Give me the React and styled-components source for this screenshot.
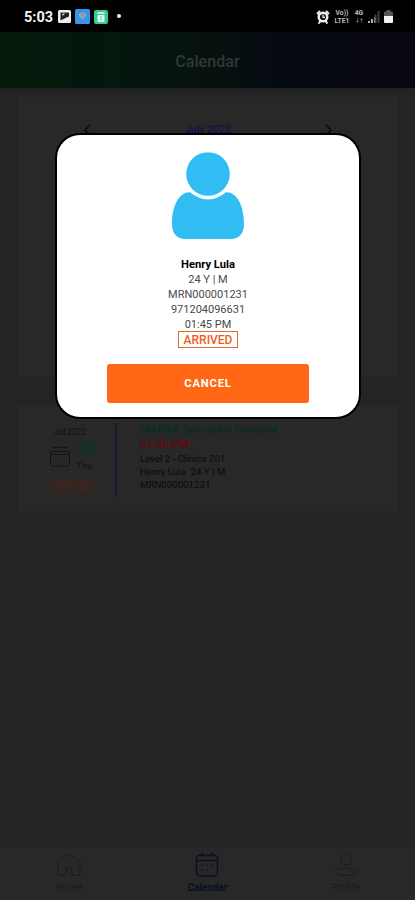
import React from "react"
import styled, { createGlobalStyle } from "styled-components"

const GlobalStyle = createGlobalStyle`
  * {
    box-sizing: border-box;
  }
  body {
    margin: 0;
    background: #242424;
    font-family: Roboto, "Liberation Sans", sans-serif;
  }
`
const Screen = styled.div`
  position: relative;
  display: flex;
  flex-direction: column;
  width: 415px;
  height: 900px;
  overflow: hidden;
  background: #242424;
`
const StatusBar = styled.div`
  display: flex;
  justify-content: space-between;
  height: 32px;
  padding: 1px 22px 0 24px;
  background: #000;
  color: #f4f4f4;
`
const StatusGroup = styled.div`
  display: flex;
  align-items: center;
  gap: ${({ $gap }) => $gap}px;
`
const Clock = styled.span`
  width: 29px;
  margin-right: 1px;
  padding-top: 1px;
  font-size: 14.5px;
  font-weight: 700;
`
const Dot = styled.span`
  width: 4px;
  height: 4px;
  margin: -2px 0 0 5px;
  border-radius: 50%;
  background: #eee;
`
const NetworkColumn = styled.span`
  display: flex;
  flex-direction: column;
  align-items: center;
  width: ${({ $width }) => $width}px;
`
const NetworkLabel = styled.span`
  font-size: 6.8px;
  font-weight: 700;
  line-height: 8px;
  color: #bbb;
`
const Header = styled.header`
  display: flex;
  align-items: center;
  justify-content: center;
  height: 57px;
  padding-top: 3px;
  background: linear-gradient(90deg, #04190a 0%, #06160f 35%, #07110f 52%, #060a12 68%, #090713 100%);
  border-bottom: 1px solid #1b2020;
`
const HeaderTitle = styled.h1`
  margin: 0;
  font-size: 16px;
  font-weight: 500;
  letter-spacing: 0.1px;
  color: #303737;
`
const Content = styled.main`
  flex: 1;
  display: flex;
  flex-direction: column;
  gap: 29px;
  padding: 8px 17px 0 18px;
`
const MonthCard = styled.section`
  height: 279px;
  padding: 24px 65px 0;
  background: #282828;
`
const MonthRow = styled.div`
  display: flex;
  align-items: center;
  justify-content: space-between;
`
const MonthName = styled.span`
  font-size: 10.5px;
  line-height: 18px;
  font-weight: 500;
  color: #12124a;
`
const VisitCard = styled.section`
  display: flex;
  height: 106px;
  padding: 18px 0 0 32px;
  background: #282828;
`
const DateColumn = styled.div`
  display: flex;
  flex-direction: column;
  width: 67px;
  height: 74px;
  padding-top: 4px;
  border-right: 2px solid #1c1832;
`
const MonthLabel = styled.span`
  padding-left: 4px;
  font-size: 8.3px;
  line-height: 10px;
  color: #101010;
`
const DateRow = styled.div`
  display: flex;
  align-items: center;
  gap: 6px;
  height: 38px;
`
const DayBlock = styled.div`
  display: flex;
  flex-direction: column;
`
const DayNumber = styled.span`
  font-size: 16px;
  line-height: 19px;
  font-weight: 700;
  color: #0a3320;
`
const DayName = styled.span`
  font-size: 9.5px;
  line-height: 15px;
  color: #111;
`
const SmallTag = styled.span`
  width: 44px;
  height: 13px;
  margin-top: 5px;
  border: 1px solid #4a2010;
  font-size: 8.8px;
  line-height: 12px;
  text-align: center;
  color: #56230e;
`
const VisitDetails = styled.div`
  display: flex;
  flex-direction: column;
  padding-left: 23px;
`
const Hospital = styled.span`
  font-size: 11px;
  line-height: 14px;
  font-weight: 700;
  letter-spacing: 0.1px;
  color: #0a2e1d;
`
const VisitTime = styled.span`
  font-size: 11.3px;
  line-height: 15px;
  font-weight: 700;
  color: #5c0c10;
`
const VisitLine = styled.span`
  font-size: 9.7px;
  line-height: 13px;
  font-weight: 400;
  white-space: pre;
  color: #0a0a0a;
`
const TabBar = styled.nav`
  display: flex;
  height: 53px;
  background: #282828;
`
const Tab = styled.div`
  flex: 1;
  display: flex;
  flex-direction: column;
  align-items: center;
  padding-top: 5px;
  color: ${({ $active }) => ($active ? "#091024" : "#1b1b1b")};
`
const TabLabel = styled.span`
  margin-top: 4px;
  font-size: 10px;
  line-height: 13px;
  font-weight: ${({ $bold }) => ($bold ? 700 : 400)};
`
const Overlay = styled.div`
  position: absolute;
  inset: 0;
  display: flex;
  justify-content: center;
  align-items: flex-start;
  padding: 133px 0 0 1px;
`
const Dialog = styled.div`
  display: flex;
  flex-direction: column;
  align-items: center;
  width: 306px;
  height: 286px;
  padding-top: 17px;
  border: 2px solid #000;
  border-radius: 25px;
  background: #fff;
`
const PatientName = styled.strong`
  margin-top: 17px;
  font-size: 11.2px;
  line-height: 15px;
  font-weight: 700;
  color: #000;
`
const PatientLine = styled.span`
  font-size: 11px;
  line-height: 15px;
  color: #4a4a4a;
`
const ArrivedTag = styled.span`
  width: 60px;
  height: 17px;
  margin-top: -1px;
  border: 1px solid #e36a2c;
  font-size: 12px;
  line-height: 16px;
  font-weight: 500;
  text-align: center;
  color: #e8601c;
`
const CancelButton = styled.button`
  width: 202px;
  height: 39px;
  margin-top: 16px;
  padding: 0;
  border: 0;
  border-radius: 3px;
  background: #ff6714;
  font-family: inherit;
  font-size: 11.3px;
  font-weight: 700;
  letter-spacing: 0.75px;
  color: #fff;
`

const GalleryIcon = () => (
  <svg width="13" height="13" viewBox="0 0 13 13">
    <rect width="13" height="13" rx="1.5" fill="#eee" />
    <path d="M2.500 2.500h8.500v4L8.500 7.500 5.500 9 2.500 10.500z" fill="#222" />
    <path d="M4.500 3.500h2.500L4.500 6z" fill="#eee" />
  </svg>
)
const MapIcon = () => (
  <svg width="15" height="15" viewBox="0 0 15 15">
    <rect width="15" height="15" rx="1.5" fill="#3c91e8" />
    <path d="M4 5l3.500-2L11 5v2L7.500 10.500 4 7z" fill="#8cabc5" />
    <circle cx="7.5" cy="6" r="1.8" fill="#9b9187" />
  </svg>
)
const ShopIcon = () => (
  <svg width="14" height="14" viewBox="0 0 14 14">
    <rect width="14" height="14" rx="2" fill="#3bc79c" />
    <rect x="3.5" y="5" width="7" height="7" rx="1" fill="#d9fff2" />
    <path d="M4 4V3h6v1" fill="none" stroke="#d9fff2" strokeWidth="1.3" />
    <path d="M6 7h2M7 8.500v2" stroke="#3bc79c" strokeWidth="1.2" />
  </svg>
)
const AlarmIcon = () => (
  <svg width="14" height="14" viewBox="0 0 14 14">
    <path d="M1 4l3-3M13 4l-3-3M2.500 13.500l2-2.500M11.500 13.500l-2-2.500" stroke="#eee" strokeWidth="2" />
    <circle cx="7" cy="7" r="4.3" fill="#111" stroke="#eee" strokeWidth="2.4" />
    <path d="M7 4.500V7.300h2" fill="none" stroke="#eee" strokeWidth="1.2" />
  </svg>
)
const DataIcon = () => (
  <svg width="9" height="7" viewBox="0 0 9 7" fill="none" stroke="#555">
    <path d="M2.500 1v4.500M1 4l1.500 1.500L4 4M6.500 6V1.500M5 3l1.500-1.500L8 3" />
  </svg>
)
const SignalIcon = () => (
  <svg width="12" height="12" viewBox="0 0 12 12">
    <path d="M1 10v2M4 8v4" stroke="#ddd" strokeWidth="1.6" />
    <path d="M7.500 3.500V12M10.500 0V12" stroke="#3d3d3d" strokeWidth="2" />
    <path d="M6.800 6v6" stroke="#999" strokeWidth="1" />
  </svg>
)
const BatteryIcon = () => (
  <svg width="9" height="13" viewBox="0 0 9 13">
    <path d="M2.500 0h4v1.500H8a1 1 0 011 1V6H0V2.500a1 1 0 011-1h1.500z" fill="#555" />
    <path d="M0 6h9v6a1 1 0 01-1 1H1a1 1 0 01-1-1z" fill="#f2f2f2" />
  </svg>
)
const ArrowIcon = ({ d }) => (
  <svg width="8" height="12" viewBox="0 0 8 12">
    <path d={d} fill="none" stroke="#0b0b0b" strokeWidth="1.5" />
  </svg>
)
const VisitCalendarIcon = () => (
  <svg width="20" height="22" viewBox="0 0 20 22" fill="none" stroke="#101412">
    <path d="M2 2.500h16M4 1v3M10 1v3M16 1v3" strokeWidth="0.8" />
    <rect x="0.5" y="6.5" width="19" height="14.5" rx="2" />
    <path d="M1 9.500h18M6 13h1M9.500 13h1M13 13h1" strokeWidth="0.8" />
  </svg>
)
const HomeIcon = () => (
  <svg width="24" height="25" viewBox="0 0 24 25" fill="none" stroke="currentColor">
    <path d="M9 23.500H3a2 2 0 01-2-2V10L9.500 3q2.500-2 5 0L23 10v11.500a2 2 0 01-2 2h-6V18q0-3-3-3t-3 3z" />
  </svg>
)
const TabCalendarIcon = () => (
  <svg width="24" height="25" viewBox="0 0 24 25" fill="none" stroke="currentColor" strokeWidth="1.5">
    <rect x="1.5" y="3" width="21" height="21" rx="4" />
    <path d="M7 0v5M17 0v5M2 8.500h20" />
    <path d="M6 13h2M11 13h2M16 13h2M6 18h2M11 18h2" strokeWidth="1" />
  </svg>
)
const ProfileIcon = () => (
  <svg width="24" height="25" viewBox="0 0 24 25" fill="none" stroke="currentColor">
    <circle cx="12" cy="7.5" r="5.5" />
    <path d="M1.500 19.500q1-3 10.500-3t10.500 3q0 4-10.500 4t-10.500-4z" />
  </svg>
)
const PatientIcon = () => (
  <svg width="74" height="88" viewBox="0 0 74 88" fill="#31bdf3">
    <circle cx="37" cy="22" r="21.8" />
    <path d="M19 40.300Q37 54.500 55 40.300C65 40 73 52 73 72C73 81.500 68 87 60 87H14C6 87 1 81.500 1 72C1 52 9 40 19 40.300z" />
  </svg>
)

const App = () => {
  return (
    <Screen>
      <GlobalStyle />
      <StatusBar>
        <StatusGroup $gap={4}>
          <Clock>5:03</Clock>
          <GalleryIcon />
          <MapIcon />
          <ShopIcon />
          <Dot />
        </StatusGroup>
        <StatusGroup $gap={4}>
          <AlarmIcon />
          <NetworkColumn $width={16}>
            <NetworkLabel>Vo))</NetworkLabel>
            <NetworkLabel>LTE1</NetworkLabel>
          </NetworkColumn>
          <NetworkColumn $width={10}>
            <NetworkLabel>4G</NetworkLabel>
            <DataIcon />
          </NetworkColumn>
          <SignalIcon />
          <BatteryIcon />
        </StatusGroup>
      </StatusBar>
      <Header>
        <HeaderTitle>Calendar</HeaderTitle>
      </Header>
      <Content>
        <MonthCard>
          <MonthRow>
            <ArrowIcon d="M7 1L2 6l5 5" />
            <MonthName>July 2022</MonthName>
            <ArrowIcon d="M1 1l5 5-5 5" />
          </MonthRow>
        </MonthCard>
        <VisitCard>
          <DateColumn>
            <MonthLabel>Jul 2022</MonthLabel>
            <DateRow>
              <VisitCalendarIcon />
              <DayBlock>
                <DayNumber>28</DayNumber>
                <DayName>Thu</DayName>
              </DayBlock>
            </DateRow>
            <SmallTag>ARRIVED</SmallTag>
          </DateColumn>
          <VisitDetails>
            <Hospital>MANSA Specialist Hospital</Hospital>
            <VisitTime>01:45 PM</VisitTime>
            <VisitLine>Level 2 - Clinics 201</VisitLine>
            <VisitLine>{"Henry Lula  24 Y | M"}</VisitLine>
            <VisitLine>MRN000001231</VisitLine>
          </VisitDetails>
        </VisitCard>
      </Content>
      <TabBar>
        <Tab>
          <HomeIcon />
          <TabLabel>Home</TabLabel>
        </Tab>
        <Tab $active>
          <TabCalendarIcon />
          <TabLabel $bold>Calendar</TabLabel>
        </Tab>
        <Tab>
          <ProfileIcon />
          <TabLabel>Profile</TabLabel>
        </Tab>
      </TabBar>
      <Overlay>
        <Dialog>
          <PatientIcon />
          <PatientName>Henry Lula</PatientName>
          <PatientLine>24 Y | M</PatientLine>
          <PatientLine>MRN000001231</PatientLine>
          <PatientLine>971204096631</PatientLine>
          <PatientLine>01:45 PM</PatientLine>
          <ArrivedTag>ARRIVED</ArrivedTag>
          <CancelButton>CANCEL</CancelButton>
        </Dialog>
      </Overlay>
    </Screen>
  )
}

export default App
